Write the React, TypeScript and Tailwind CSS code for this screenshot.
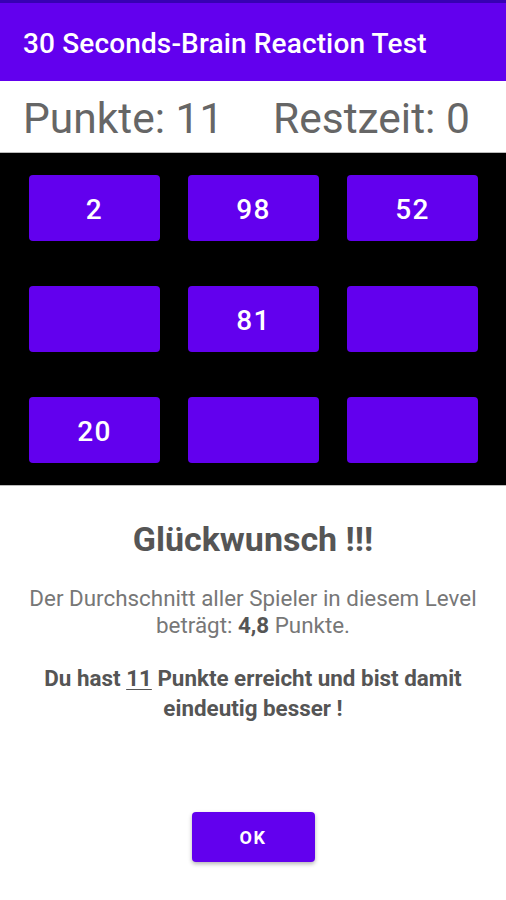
import React from "react";

const cells = ["2", "98", "52", "", "81", "", "20", "", ""];

export default function App() {
  return (
    <div className="w-[506px] h-[900px] bg-white flex flex-col overflow-hidden" style={{ fontFamily: "Roboto, 'Noto Sans', sans-serif" }}>
      <div className="h-[3px] bg-[#3700B3]" />
      <div className="h-[78px] bg-[#6200EE] flex items-center pl-[23px] pt-[3px]">
        <span className="text-white text-[28px] font-medium tracking-[0.005em] leading-none">30 Seconds-Brain Reaction Test</span>
      </div>
      <div className="h-[71px] flex items-center pl-[23px] pt-[5px] text-[#666666] text-[42.5px] leading-none">
        <span className="w-[250px]">Punkte: 11</span>
        <span>Restzeit: 0</span>
      </div>
      <div className="bg-black border-t border-b border-[#bbbbbb] pl-[29px] pr-[28px] pt-[22px] pb-[22px] grid grid-cols-3 gap-x-[28px] gap-y-[45px]">
        {cells.map((c, i) => (
          <div key={i} className="h-[66px] rounded-[4px] bg-[#6200EE] flex items-center justify-center pt-[3px] text-white text-[28px] font-medium tracking-[0.05em]">
            {c}
          </div>
        ))}
      </div>
      <div className="flex flex-col items-center">
        <div className="mt-[33px] text-[34px] font-bold text-[#555555] leading-[40px]">Glückwunsch !!!</div>
        <div className="mt-[26px] text-center text-[22.4px] text-[#777777] leading-[27px] whitespace-nowrap">
          Der Durchschnitt aller Spieler in diesem Level
          <br />
          beträgt: <span className="font-bold text-[#555555]">4,8</span> Punkte.
        </div>
        <div className="mt-[24px] text-center text-[22.4px] font-bold text-[#555555] leading-[30px] whitespace-nowrap">
          Du hast <span className="underline underline-offset-[3px] decoration-1">11</span> Punkte erreicht und bist damit
          <br />
          eindeutig besser !
        </div>
        <button className="mt-[89px] w-[123px] h-[50px] rounded-[4px] bg-[#6200EE] text-white text-[18px] font-bold tracking-[0.09em] shadow-[0_2px_4px_rgba(0,0,0,0.3)]">
          OK
        </button>
      </div>
    </div>
  );
}
